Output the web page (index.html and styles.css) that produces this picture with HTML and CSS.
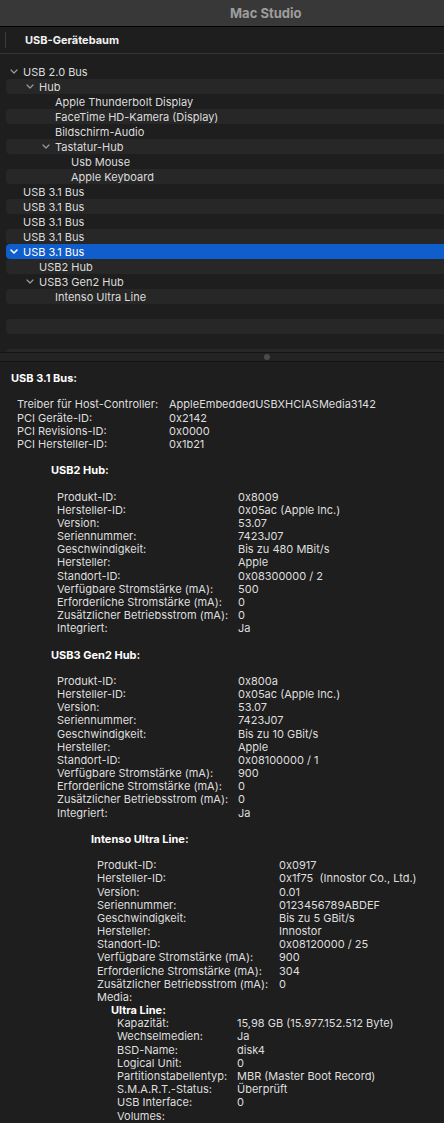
FILE: index.html
```html
<!DOCTYPE html>
<html lang="de">
  <head>
    <meta charset="UTF-8" />
    <meta name="viewport" content="width=device-width, initial-scale=1.0" />
    <title>Mac Studio – USB-Gerätebaum</title>
    <link rel="stylesheet" href="styles.css">
  </head>
  <body>
    <div class="titlebar"><span class="window-title">Mac Studio</span></div>

    <div class="column-header">
      <span class="col-divider"></span>
      <span class="col-title">USB-Gerätebaum</span>
    </div>

    <div class="tree">
      <div class="row lvl0"><span class="chev"><svg viewBox="0 0 8 5" width="8" height="5"><polyline points="1,1 4,4 7,1"/></svg></span>USB 2.0 Bus</div>
      <div class="row lvl1 alt"><span class="chev"><svg viewBox="0 0 8 5" width="8" height="5"><polyline points="1,1 4,4 7,1"/></svg></span>Hub</div>
      <div class="row lvl2"><span class="chev"></span>Apple Thunderbolt Display</div>
      <div class="row lvl2 alt"><span class="chev"></span>FaceTime HD-Kamera (Display)</div>
      <div class="row lvl2"><span class="chev"></span>Bildschirm-Audio</div>
      <div class="row lvl2 alt"><span class="chev"><svg viewBox="0 0 8 5" width="8" height="5"><polyline points="1,1 4,4 7,1"/></svg></span>Tastatur-Hub</div>
      <div class="row lvl3"><span class="chev"></span>Usb Mouse</div>
      <div class="row lvl3 alt"><span class="chev"></span>Apple Keyboard</div>
      <div class="row lvl0"><span class="chev"></span>USB 3.1 Bus</div>
      <div class="row lvl0 alt"><span class="chev"></span>USB 3.1 Bus</div>
      <div class="row lvl0"><span class="chev"></span>USB 3.1 Bus</div>
      <div class="row lvl0 alt"><span class="chev"></span>USB 3.1 Bus</div>
      <div class="row lvl0 selected"><span class="chev"><svg viewBox="0 0 8 5" width="8" height="5"><polyline points="1,1 4,4 7,1"/></svg></span>USB 3.1 Bus</div>
      <div class="row lvl1 alt"><span class="chev"></span>USB2 Hub</div>
      <div class="row lvl1"><span class="chev"><svg viewBox="0 0 8 5" width="8" height="5"><polyline points="1,1 4,4 7,1"/></svg></span>USB3 Gen2 Hub</div>
      <div class="row lvl2 alt"><span class="chev"></span>Intenso Ultra Line</div>
      <div class="row"></div>
      <div class="row alt"></div>
      <div class="row"></div>
      <div class="row alt"></div>
    </div>

    <div class="splitter"><span class="grip"></span></div>

    <div class="details">
      <section class="info">
        <div class="info-title">USB 3.1 Bus:</div>
        <dl class="props props-bus">
          <dt>Treiber für Host-Controller:</dt><dd>AppleEmbeddedUSBXHCIASMedia3142</dd>
          <dt>PCI Geräte-ID:</dt><dd>0x2142</dd>
          <dt>PCI Revisions-ID:</dt><dd>0x0000</dd>
          <dt>PCI Hersteller-ID:</dt><dd>0x1b21</dd>
        </dl>

        <section class="info nested">
          <div class="info-title">USB2 Hub:</div>
          <dl class="props props-hub">
            <dt>Produkt-ID:</dt><dd>0x8009</dd>
            <dt>Hersteller-ID:</dt><dd>0x05ac (Apple Inc.)</dd>
            <dt>Version:</dt><dd>53.07</dd>
            <dt>Seriennummer:</dt><dd>7423J07</dd>
            <dt>Geschwindigkeit:</dt><dd>Bis zu 480 MBit/s</dd>
            <dt>Hersteller:</dt><dd>Apple</dd>
            <dt>Standort-ID:</dt><dd>0x08300000 / 2</dd>
            <dt>Verfügbare Stromstärke (mA):</dt><dd>500</dd>
            <dt>Erforderliche Stromstärke (mA):</dt><dd>0</dd>
            <dt>Zusätzlicher Betriebsstrom (mA):</dt><dd>0</dd>
            <dt>Integriert:</dt><dd>Ja</dd>
          </dl>
        </section>

        <section class="info nested">
          <div class="info-title">USB3 Gen2 Hub:</div>
          <dl class="props props-hub">
            <dt>Produkt-ID:</dt><dd>0x800a</dd>
            <dt>Hersteller-ID:</dt><dd>0x05ac (Apple Inc.)</dd>
            <dt>Version:</dt><dd>53.07</dd>
            <dt>Seriennummer:</dt><dd>7423J07</dd>
            <dt>Geschwindigkeit:</dt><dd>Bis zu 10 GBit/s</dd>
            <dt>Hersteller:</dt><dd>Apple</dd>
            <dt>Standort-ID:</dt><dd>0x08100000 / 1</dd>
            <dt>Verfügbare Stromstärke (mA):</dt><dd>900</dd>
            <dt>Erforderliche Stromstärke (mA):</dt><dd>0</dd>
            <dt>Zusätzlicher Betriebsstrom (mA):</dt><dd>0</dd>
            <dt>Integriert:</dt><dd>Ja</dd>
          </dl>

          <section class="info nested">
            <div class="info-title">Intenso Ultra Line:</div>
            <dl class="props props-device">
              <dt>Produkt-ID:</dt><dd>0x0917</dd>
              <dt>Hersteller-ID:</dt><dd>0x1f75  (Innostor Co., Ltd.)</dd>
              <dt>Version:</dt><dd>0.01</dd>
              <dt>Seriennummer:</dt><dd>0123456789ABDEF</dd>
              <dt>Geschwindigkeit:</dt><dd>Bis zu 5 GBit/s</dd>
              <dt>Hersteller:</dt><dd>Innostor</dd>
              <dt>Standort-ID:</dt><dd>0x08120000 / 25</dd>
              <dt>Verfügbare Stromstärke (mA):</dt><dd>900</dd>
              <dt>Erforderliche Stromstärke (mA):</dt><dd>304</dd>
              <dt>Zusätzlicher Betriebsstrom (mA):</dt><dd>0</dd>
            </dl>
            <div class="media">
              <div class="media-label">Media:</div>
              <div class="media-title">Ultra Line:</div>
              <dl class="props props-media">
                <dt>Kapazität:</dt><dd>15,98 GB (15.977.152.512 Byte)</dd>
                <dt>Wechselmedien:</dt><dd>Ja</dd>
                <dt>BSD-Name:</dt><dd>disk4</dd>
                <dt>Logical Unit:</dt><dd>0</dd>
                <dt>Partitionstabellentyp:</dt><dd>MBR (Master Boot Record)</dd>
                <dt>S.M.A.R.T.-Status:</dt><dd>Überprüft</dd>
                <dt>USB Interface:</dt><dd>0</dd>
                <dt>Volumes:</dt><dd></dd>
              </dl>
            </div>
          </section>
        </section>
      </section>
    </div>
  </body>
</html>
```

FILE: styles.css
```css
html,
body {
  margin: 0;
  height: 1123px;
  overflow: hidden;
}
body {
  background-color: #1e1e1e;
  color: #dedede;
  font-family: Inter, "Liberation Sans", Arial, sans-serif;
  font-size: 11px;
}

/* Fenstertitel */
.titlebar {
  height: 26px;
  background-color: #383838;
  border-bottom: 1px solid #000;
  display: flex;
  align-items: center;
  padding-left: 230px;
}
.window-title {
  font-size: 13px;
  font-weight: bold;
  color: #9d9d9d;
}

/* Spaltenkopf */
.column-header {
  height: 26px;
  border-bottom: 1px solid #353535;
  display: flex;
  align-items: center;
}
.col-divider {
  width: 1px;
  height: 16px;
  margin-left: 5px;
  background-color: #3c3c3c;
}
.col-title {
  margin-left: 19px;
  font-weight: bold;
  color: #f2f2f2;
}

/* Baum */
.tree {
  height: 288px;
  padding-top: 10px;
  overflow: hidden;
}
.row {
  height: 15px;
  margin-left: 6px;
  padding-left: 4px;
  display: flex;
  align-items: center;
  border-radius: 4px 0 0 4px;
  color: #dcdcdc;
  white-space: nowrap;
}
.row.alt {
  background-color: #272727;
}
.row.selected {
  background-color: #105dcc;
  color: #fff;
}
.lvl1 { padding-left: 20px; }
.lvl2 { padding-left: 36px; }
.lvl3 { padding-left: 52px; }
.chev {
  width: 13px;
  flex: none;
  display: flex;
  align-items: center;
}
.chev svg {
  fill: none;
  stroke: #9a9a9a;
  stroke-width: 1.2;
  stroke-linecap: round;
  stroke-linejoin: round;
}
.selected .chev svg {
  stroke: #fff;
  stroke-width: 1.6;
}

/* Trenner */
.splitter {
  height: 8px;
  border-top: 1px solid #141414;
  border-bottom: 1px solid #141414;
  background-color: #232323;
  display: flex;
  justify-content: center;
  align-items: center;
  padding-left: 90px;
}
.grip {
  width: 6px;
  height: 6px;
  border-radius: 50%;
  background-color: #4a4a4a;
}

/* Details */
.details {
  padding: 10px 0 0 11px;
  line-height: 13.17px;
  color: #dedede;
}
.info-title {
  font-weight: bold;
  color: #fff;
  margin-bottom: 13.17px;
}
.info.nested {
  margin-left: 40px;
}
.props {
  display: grid;
  margin: 0 0 13.17px 6px;
}
.props dt,
.props dd {
  margin: 0;
  white-space: pre;
}
.props-bus { grid-template-columns: 152px auto; }
.props-hub { grid-template-columns: 181px auto; }
.props-device { grid-template-columns: 182px auto; margin-bottom: 0; }
.props-media { grid-template-columns: 120px auto; margin: 0 0 0 6px; }
.media {
  margin-left: 6px;
}
.media-title {
  margin-left: 14px;
  font-weight: bold;
  color: #fff;
}
.media .props-media {
  margin-left: 20px;
}
```
